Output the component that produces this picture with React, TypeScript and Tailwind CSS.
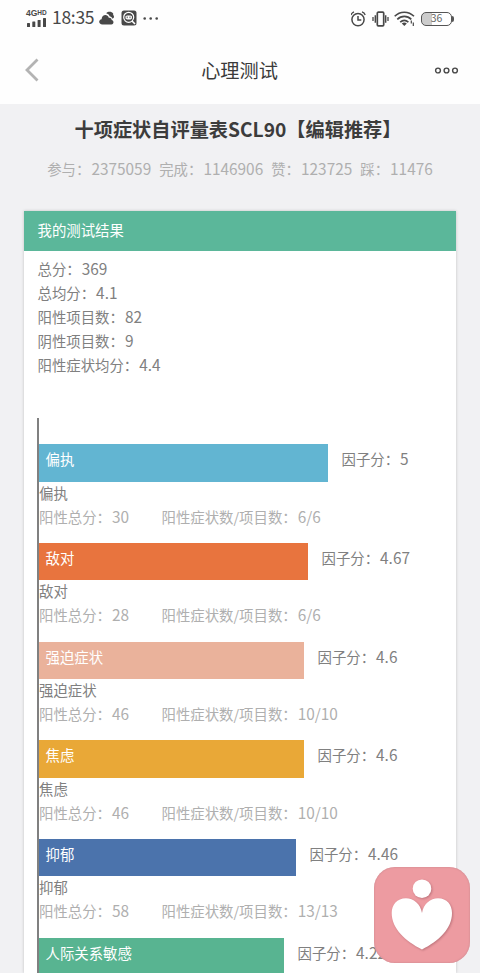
import type { ReactNode } from "react";

const summary = [
  { label: "总分", value: "369" },
  { label: "总均分", value: "4.1" },
  { label: "阳性项目数", value: "82" },
  { label: "阴性项目数", value: "9" },
  { label: "阳性症状均分", value: "4.4" },
];

const stats = [
  { label: "参与", value: "2375059" },
  { label: "完成", value: "1146906" },
  { label: "赞", value: "123725" },
  { label: "踩", value: "11476" },
];

type FactorProps = {
  name: string;
  score: string;
  bar: string;
  total?: string;
  items?: string;
};

const factors: FactorProps[] = [
  { name: "偏执", score: "5", total: "30", items: "6/6", bar: "w-[289px] bg-[#62b5d2]" },
  { name: "敌对", score: "4.67", total: "28", items: "6/6", bar: "w-[269px] bg-[#e8743e]" },
  { name: "强迫症状", score: "4.6", total: "46", items: "10/10", bar: "w-[265px] bg-[#eab29b]" },
  { name: "焦虑", score: "4.6", total: "46", items: "10/10", bar: "w-[265px] bg-[#e9a837]" },
  { name: "抑郁", score: "4.46", total: "58", items: "13/13", bar: "w-[257px] bg-[#4b73ac]" },
  { name: "人际关系敏感", score: "4.22", bar: "w-[245px] bg-[#58b491]" },
];

// digits sit slightly larger than the surrounding Chinese text
function Num({ children }: { children: ReactNode }) {
  return <span className="ml-px text-[15.4px] leading-none">{children}</span>;
}

function StatusBar() {
  return (
    <div className="flex h-9 items-center justify-between pl-[26px] pr-[26px] text-[#484848]">
      <div className="flex items-center">
        <div className="flex w-[21px] flex-col">
          <div className="flex h-[7px] items-start font-['Liberation_Sans',sans-serif] font-bold leading-[7px]">
            <span className="text-[8.5px]">4G</span>
            <span className="text-[6.5px] leading-[5px]">HD</span>
          </div>
          <svg className="mt-[1px]" width="21" height="9" viewBox="0 0 21 9" fill="currentColor">
            <rect x="1" y="5" width="3" height="4" rx=".5" />
            <rect x="6.3" y="3.5" width="3" height="5.5" rx=".5" />
            <rect x="11.6" y="2" width="3" height="7" rx=".5" />
            <rect x="17" y="0" width="3" height="9" rx=".5" />
          </svg>
        </div>
        <span className="-mt-0.5 ml-[5px] w-[43px] text-[17.5px] leading-9 tracking-[-0.3px]">18:35</span>
        <svg className="ml-[4px]" width="16" height="14" viewBox="0 0 16 14" fill="currentColor">
          <path d="M7.2 2.3C9 .2 12.7.4 14.2 2.5c-.6 1.5 1 2 .8 3.5-.2 1-1 1.4-1.4 1.7C12.7 6 11.5 5.5 10.6 5.3 10 3.5 8.7 2.7 7.2 2.3Z" />
          <path d="M3.5 13.5C-.8 13.5-.7 8.7 2.6 8.2 2.7 3.3 8.7 2.5 9.8 6.7c2.5-.2 3 1.5 2.8 2.3 2.4.2 2.7 4.5-.3 4.5Z" />
        </svg>
        <svg className="ml-[6px]" width="16" height="16" viewBox="0 0 16 16" fill="none">
          <rect x=".5" y=".5" width="15" height="15" rx="2.5" fill="currentColor" />
          <circle cx="7.7" cy="7.3" r="5" stroke="#fff" strokeWidth="1.2" />
          <path d="m11 11 3 3" stroke="#fff" strokeWidth="1.6" />
          <path d="M4.5 6.2 6 5.5h3.5l1.4.8v2.2L9.5 9.5H6L4.5 8.5Z" fill="#fff" />
          <path d="M6.2 6.5v1.7M9 6.5v1.7" stroke="#484848" strokeWidth=".9" />
        </svg>
        <svg className="ml-[6px]" width="16" height="4" viewBox="0 0 16 4" fill="currentColor">
          <circle cx="1.7" cy="2.5" r="1.3" />
          <circle cx="7.7" cy="2.5" r="1.3" />
          <circle cx="13.7" cy="2.5" r="1.3" />
        </svg>
      </div>

      <div className="flex items-center pt-px">
        <svg width="16" height="16" viewBox="0 0 16 16" fill="none" stroke="currentColor" strokeWidth="1.5">
          <circle cx="7" cy="8.6" r="6.1" />
          <path d="M7 5v4h3.3" />
          <path d="M0 4A5 5 0 0 1 3 .8M11 .8A5 5 0 0 1 14.2 4" strokeWidth="1.3" />
        </svg>
        <svg className="ml-[5px]" width="18" height="16" viewBox="0 0 18 16" fill="none" stroke="currentColor">
          <rect x="5.3" y="1.2" width="6.4" height="13.6" rx="1" strokeWidth="1.7" />
          <path d="M3.3 4.2v7.6M13.7 4.2v7.6" strokeWidth="1.4" />
          <path d="M1 6v4M16 6v4" strokeWidth="1.3" />
        </svg>
        <svg className="ml-[4px]" width="21" height="16" viewBox="0 0 21 16" fill="none" stroke="currentColor" strokeWidth="1.6">
          <path d="M.7 5.3C6-.2 14.5-.2 20 5.3" />
          <path d="M3.3 8.4c4-4 10-4 14 0" />
          <path d="M6.2 11.2c2.5-2.3 5.7-2.3 8.200 0" />
          <path d="m10.3 15-2.5-2.5c1.4-1.3 3.6-1.3 5 0Z" fill="currentColor" stroke="none" />
          <path d="M17.3 9.5v3M19.3 11.5v3.5" strokeWidth="1.2" />
        </svg>
        <div className="ml-[6px] flex h-[14px] w-[31px] items-center justify-center rounded-[5px] border-[1.5px] border-[#555] bg-linear-to-r from-[#ccc] from-36% to-white to-36% pb-px text-[10.5px] leading-none text-[#666]">
          36
        </div>
        <div className="h-[6px] w-[2px] rounded-r bg-[#555]" />
      </div>
    </div>
  );
}

function NavBar() {
  return (
    <div className="flex h-[68px] items-center justify-between pl-[24px] pr-[21px]">
      <svg width="32" height="24" viewBox="0 0 32 24" fill="none">
        <path d="M13.5 1.5 3 12l10.5 10.5" stroke="#b3b3b3" strokeWidth="2.8" />
      </svg>
      <h1 className="-mt-px text-[19.2px] leading-7 text-[#3a3a3a]">心理测试</h1>
      <div className="flex w-[36px] justify-end">
        <svg width="25" height="8" viewBox="0 0 25 8" fill="none" stroke="#484848" strokeWidth="1.4">
          <circle cx="4" cy="4.5" r="2.4" />
          <circle cx="12.5" cy="4.5" r="2.4" />
          <circle cx="21" cy="4.5" r="2.4" />
        </svg>
      </div>
    </div>
  );
}

function Factor({ name, score, total, items, bar }: FactorProps) {
  return (
    <div className={total ? "h-[98.7px] shrink-0" : "shrink-0"}>
      <div className="flex h-[37.3px]">
        <div className={`h-full shrink-0 pl-[6.5px] leading-[29px] text-white ${bar}`}>{name}</div>
        <div className="ml-[13.5px] whitespace-nowrap leading-[29px] text-[#808080]">
          因子分：<Num>{score}</Num>
        </div>
      </div>
      {total && (
        <>
          <div className="h-6 leading-[21px] text-[#808080]">{name}</div>
          <div className="flex h-6 whitespace-nowrap leading-[22px] text-[#afafaf]">
            <div className="w-[122.5px]">
              阳性总分：<Num>{total}</Num>
            </div>
            <div>
              阳性症状数/项目数：<Num>{items}</Num>
            </div>
          </div>
        </>
      )}
    </div>
  );
}

function CareButton() {
  return (
    <button className="fixed bottom-[10px] right-[10px] h-24 w-24 overflow-hidden rounded-[21px] bg-[#ed9ba1] shadow-[inset_0_0_2px_#c08088]" aria-label="heart">
      <svg width="96" height="96" viewBox="0 0 96 96" fill="#fff" className="drop-shadow-[1px_1px_1px_rgba(120,60,70,0.4)]">
        <circle cx="48" cy="21.7" r="9.3" />
        <path d="M48 46C46.5 37 39.5 31.3 32 31.3 23 31.3 17.7 38 17.7 46 17.7 62 31.5 74 48 82.5 64.5 74 78 62 78 46 78 38 73 31.3 64 31.3 56.5 31.3 49.5 37 48 46Z" />
      </svg>
    </button>
  );
}

export default function App() {
  return (
    <div className="flex h-[973px] w-[480px] flex-col overflow-hidden bg-[#f1f1f3] font-['Noto_Sans_CJK_SC',sans-serif] text-[14.4px]">
      <header className="h-[104px] shrink-0 bg-[#fefefe]">
        <StatusBar />
        <NavBar />
      </header>

      <div className="shrink-0 text-center">
        <h2 className="mt-[10px] whitespace-nowrap pr-[4px] text-[19.2px] font-bold leading-[30px] text-[#3c3c3c]">
          十项症状自评量表SCL90【编辑推荐】
        </h2>
        <div className="mt-[13px] flex justify-center gap-2 whitespace-nowrap leading-6 text-[#afafaf]">
          {stats.map((s) => (
            <span key={s.label}>
              {s.label}：<Num>{s.value}</Num>
            </span>
          ))}
        </div>
      </div>

      <main className="mx-6 mt-[30px] flex min-h-0 grow flex-col bg-white shadow-[0_0_3px_rgba(0,0,0,0.2)]">
        <div className="h-10 shrink-0 bg-[#5bb79a] pl-[13.5px] leading-[38px] text-white">我的测试结果</div>
        <div className="mt-[6px] shrink-0 pl-[13.5px] text-[#808080]">
          {summary.map((s) => (
            <div key={s.label} className="h-6 leading-6">
              {s.label}：<Num>{s.value}</Num>
            </div>
          ))}
        </div>
        <div className="ml-[13px] mt-[41px] flex min-h-0 grow flex-col overflow-hidden border-l-2 border-[#808080] pt-[26.3px]">
          {factors.map((f) => (
            <Factor key={f.name} {...f} />
          ))}
        </div>
      </main>

      <CareButton />
    </div>
  );
}
